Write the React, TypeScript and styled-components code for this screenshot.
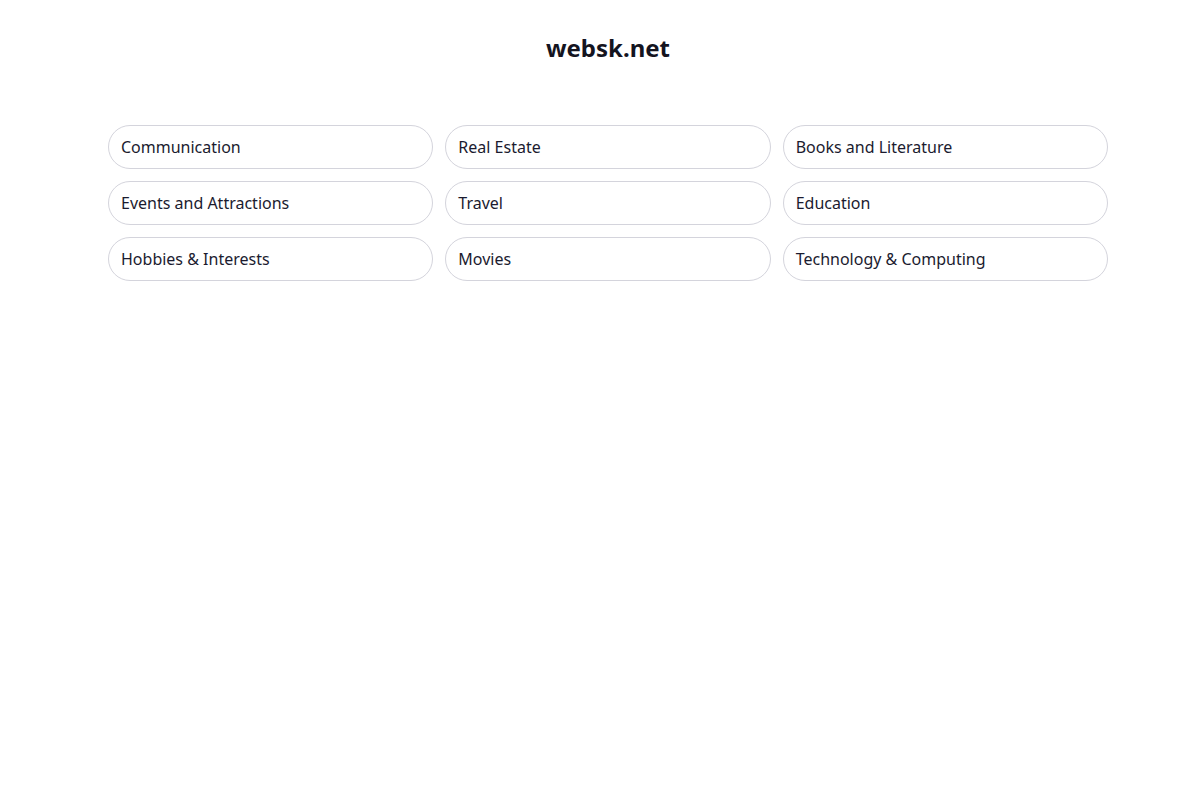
import React from "react";
import styled, { createGlobalStyle } from "styled-components";

const GlobalStyle = createGlobalStyle`
  body {
    margin: 0;
    padding-left: 16px;
    background: #fff;
    font-family: "Noto Sans", "Open Sans", sans-serif;
  }
`;

const Page = styled.main`
  max-width: 1000px;
  margin: 0 auto;
  padding: 32px 0;
`;

const Title = styled.h1`
  margin: 0 0 61px;
  text-align: center;
  font-size: 24px;
  line-height: 32px;
  font-weight: 700;
  color: #14141f;
`;

const Grid = styled.div`
  display: grid;
  grid-template-columns: repeat(3, 1fr);
  gap: 12px;
`;

const Pill = styled.a`
  display: flex;
  align-items: center;
  height: 44px;
  box-sizing: border-box;
  padding: 0 12px;
  border: 1px solid #d4d4dc;
  border-radius: 22px;
  font-size: 16px;
  color: #1b1b2f;
  text-decoration: none;
`;

const categories = [
  "Communication",
  "Real Estate",
  "Books and Literature",
  "Events and Attractions",
  "Travel",
  "Education",
  "Hobbies & Interests",
  "Movies",
  "Technology & Computing",
];

export default function App() {
  return (
    <>
      <GlobalStyle />
      <Page>
        <Title>websk.net</Title>
        <Grid>
          {categories.map((c) => (
            <Pill key={c} href="#">
              {c}
            </Pill>
          ))}
        </Grid>
      </Page>
    </>
  );
}
